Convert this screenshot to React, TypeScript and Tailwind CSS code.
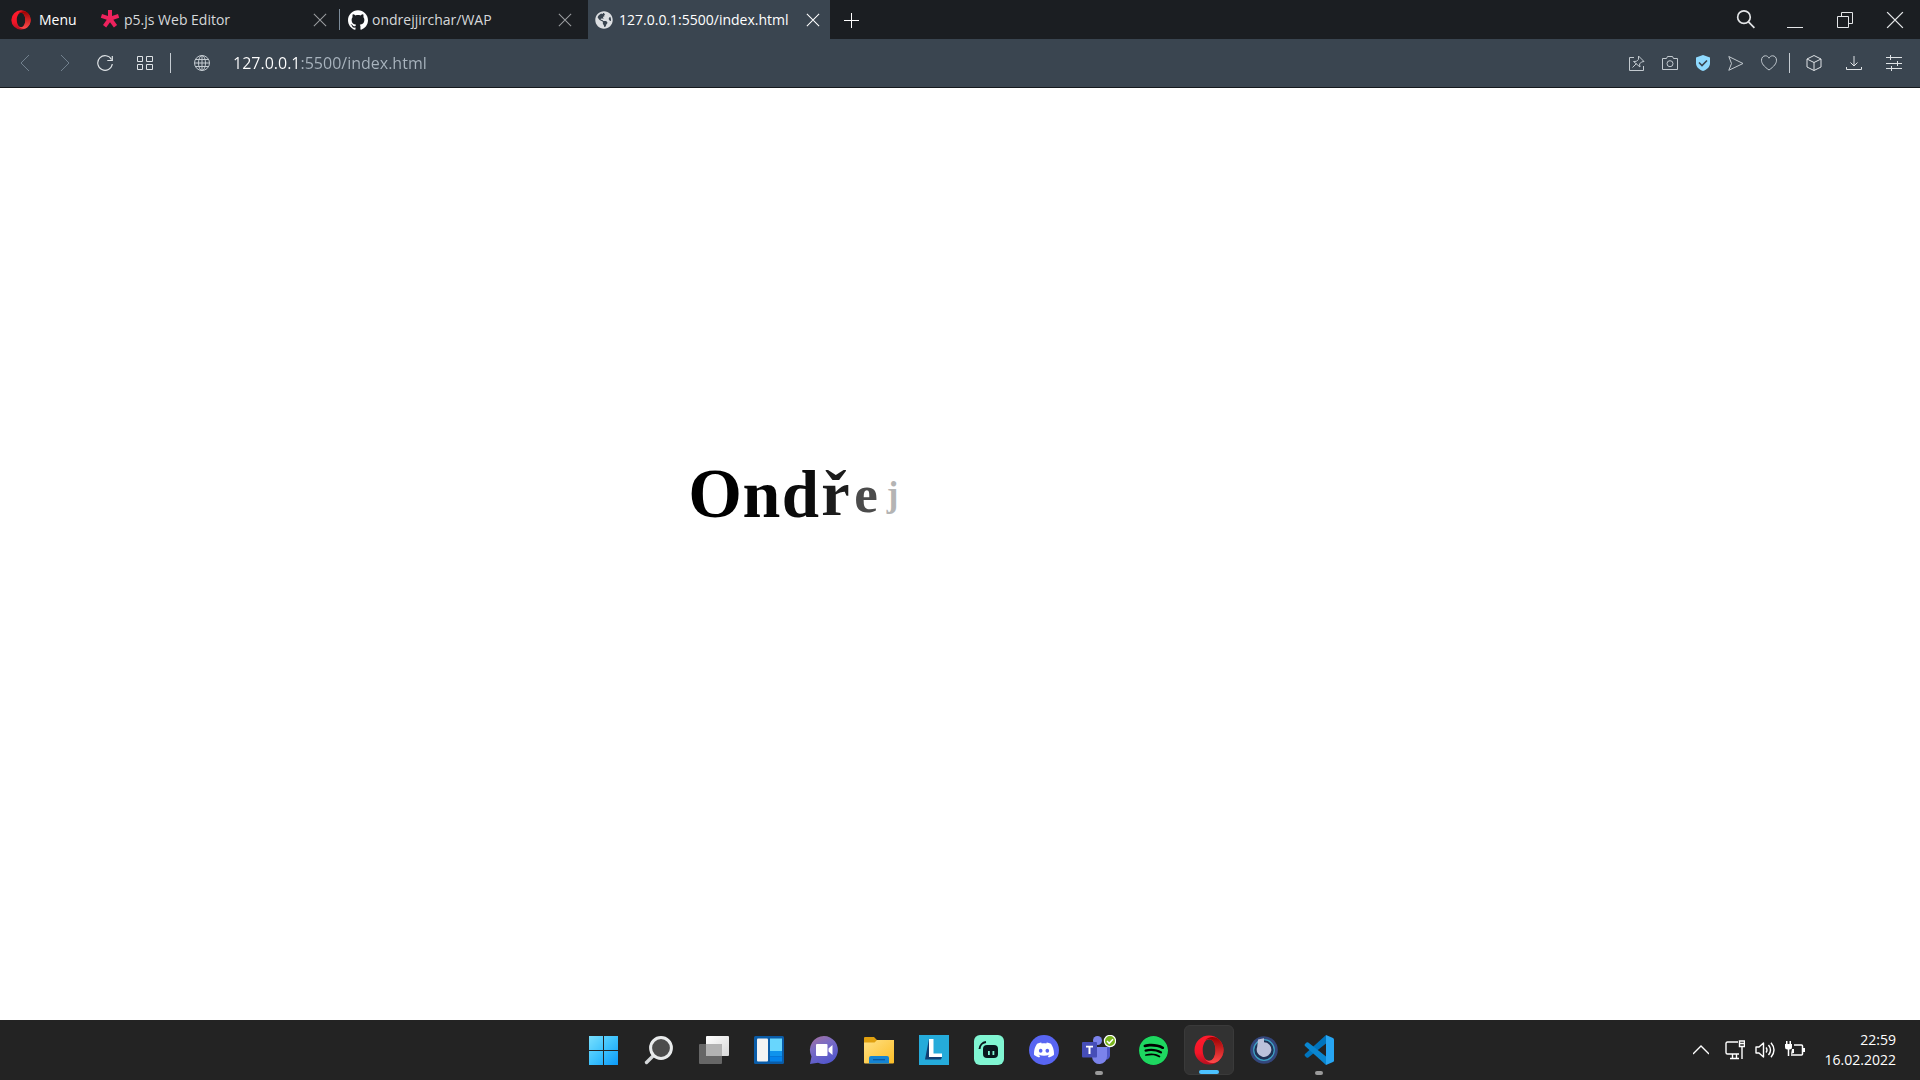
import React from 'react';
import { SiGithub, SiDiscord, SiSpotify } from 'react-icons/si';
import { FaGlobeAmericas } from 'react-icons/fa';

function Stroke({ className, size = 16, width = 1, children }: { className?: string; size?: number; width?: number; children: React.ReactNode }) {
  return (
    <svg width={size} height={size} viewBox="0 0 16 16" fill="none" stroke="currentColor" strokeWidth={width} className={className} aria-hidden="true">
      {children}
    </svg>
  );
}

function Cross({ size = 14, width = 1.2 }: { size?: number; width?: number }) {
  return (
    <Stroke size={size} width={width}>
      <path d="M1 1l14 14M15 1L1 15" />
    </Stroke>
  );
}

function OperaMark({ size, id }: { size: number; id: string }) {
  return (
    <svg width={size} height={size} viewBox="0 0 30 30" aria-hidden="true">
      <defs>
        <linearGradient id={id + 'a'} x1="0" y1="0" x2="0" y2="1">
          <stop offset="0" stopColor="#ff1b2d" />
          <stop offset=".6" stopColor="#f31628" />
          <stop offset="1" stopColor="#b50f20" />
        </linearGradient>
        <linearGradient id={id + 'b'} x1="0" y1="0" x2="0" y2="1">
          <stop offset="0" stopColor="#9c0000" />
          <stop offset="1" stopColor="#ff4b4b" />
        </linearGradient>
      </defs>
      <path fillRule="evenodd" fill={`url(#${id}a)`} d="M15 .5a14.500 14.500 0 1 0 0 29a14.500 14.500 0 1 0 0-29zM15.200 4.200c3.600 0 6.300 4.700 6.300 10.800s-2.700 10.800-6.300 10.800S8.700 21.100 8.700 15s2.900-10.800 6.500-10.800z" />
      <path fill={`url(#${id}b)`} d="M11 5.500C12.500 4.400 13.700 4.100 15.200 4.200c3.600 0 6.300 4.700 6.300 10.800s-2.700 10.800-6.300 10.800c-1.500 0-3-.6-4.200-1.500 3 4.300 9.300 4.900 13.800 1.400a14.500 14.500 0 0 0 0-21.400C20.300.8 14 1.500 11 5.500z" />
    </svg>
  );
}

function P5Mark() {
  return (
    <svg width="20" height="20" viewBox="0 0 20 20" fill="#ed225d" aria-hidden="true">
      <path d="M8 0h4v6l6-2 1.200 3.800-5.900 1.900 3.800 5.300-3.200 2.400L10 12.300l-3.800 5.200L3 15.100l3.800-5.300L.8 7.800 2 4l6 2z" />
    </svg>
  );
}

function WindowsIcon() {
  return (
    <svg width="30" height="30" viewBox="0 0 30 30" aria-hidden="true">
      <defs>
        <linearGradient id="win" x1="0" y1="0" x2="30" y2="30" gradientUnits="userSpaceOnUse">
          <stop offset="0" stopColor="#7be0fd" />
          <stop offset=".5" stopColor="#3dc2fd" />
          <stop offset="1" stopColor="#0a98f8" />
        </linearGradient>
      </defs>
      <path fill="url(#win)" d="M0 1h14v14H0zM15 1h14v14H15zM0 16h14v14H0zM15 16h14v14H15z" />
    </svg>
  );
}

function TaskSearchIcon() {
  return (
    <svg width="30" height="30" viewBox="0 0 30 30" fill="none" aria-hidden="true">
      <path d="M2.500 27.500l7-7" stroke="#d5d8da" strokeWidth="3.400" strokeLinecap="round" />
      <circle cx="17" cy="13" r="10.400" fill="#4c4c4c" stroke="#e9ebec" strokeWidth="3" />
    </svg>
  );
}

function TaskViewIcon() {
  return (
    <svg width="30" height="30" viewBox="0 0 30 30" aria-hidden="true">
      <defs>
        <linearGradient id="tv" x1="0" y1="0" x2="1" y2="1">
          <stop offset="0" stopColor="#fff" />
          <stop offset="1" stopColor="#d8d8d8" />
        </linearGradient>
      </defs>
      <rect y="9" width="23" height="20" rx="1" fill="#666" />
      <rect x="7" y="1" width="23" height="20" rx="1" fill="url(#tv)" />
      <path d="M7 9h16v12H7z" fill="#b2b2b2" />
    </svg>
  );
}

function WidgetsIcon() {
  return (
    <svg width="30" height="30" viewBox="0 0 30 30" aria-hidden="true">
      <rect y="1" width="30" height="28" rx="1.500" fill="#0a5ca8" />
      <rect x="3" y="3.500" width="11" height="23" rx="1" fill="#f3f3f3" />
      <path d="M16 3.500h12V16H16z" fill="#68d6fd" />
      <path d="M16 16h12v5H16z" fill="#0f93ec" />
      <path d="M16 21.300h12v5.200H16z" fill="#0583ea" />
    </svg>
  );
}

function ChatIcon() {
  return (
    <svg width="30" height="30" viewBox="0 0 30 30" aria-hidden="true">
      <defs>
        <linearGradient id="chat" x1="0" y1="0" x2=".5" y2="1">
          <stop offset="0" stopColor="#a8709c" />
          <stop offset=".45" stopColor="#7a6cc4" />
          <stop offset="1" stopColor="#5558cc" />
        </linearGradient>
      </defs>
      <path fill="url(#chat)" d="M15 1a14 14 0 1 1-6 26.700L1 29l1.500-7.500A14 14 0 0 1 15 1z" />
      <rect x="7" y="9" width="11.500" height="12" rx="1" fill="#fff" />
      <path d="M19.500 13.500l4-3.500v10l-4-3.500z" fill="#fff" />
    </svg>
  );
}

function FolderIcon() {
  return (
    <svg width="30" height="30" viewBox="0 0 30 30" aria-hidden="true">
      <defs>
        <linearGradient id="fold" x1="0" y1="0" x2="1" y2="1">
          <stop offset="0" stopColor="#ffe083" />
          <stop offset="1" stopColor="#fcbd26" />
        </linearGradient>
      </defs>
      <path d="M0 3q0-1 1-1h9l3 3h16q1 0 1 1v6H0z" fill="#e0a00f" />
      <path d="M0 7.500h10.500L13 5h17v22.500q0 1-1 1H1q-1 0-1-1z" fill="url(#fold)" />
      <path d="M5 28.500V23q0-2 2-2h16q2 0 2 2v5.500z" fill="#1484d3" />
      <path d="M9 24.700h12" stroke="#0a549b" strokeWidth="1.200" />
    </svg>
  );
}

function LIcon() {
  return (
    <svg width="30" height="30" viewBox="0 0 30 30" aria-hidden="true">
      <path d="M0 0h30v30H0z" fill="#25abda" />
      <path d="M10 4L6 24.500h16l1-2.500-12-1z" fill="#123f73" />
      <path d="M10 4h4.500v14.500H23V22H10z" fill="#fff" />
    </svg>
  );
}

function StreamlabsIcon() {
  return (
    <svg width="30" height="30" viewBox="0 0 30 30" aria-hidden="true">
      <rect width="30" height="30" rx="6" fill="#80f5d2" />
      <path d="M5.500 14A7.500 7.500 0 0 1 12 7" fill="none" stroke="#09161d" strokeWidth="2" />
      <rect x="9" y="10" width="15" height="13" rx="4" fill="#09161d" />
      <path d="M14 16h1.800v4H14zM18.500 16h1.800v4h-1.800z" fill="#80f5d2" />
    </svg>
  );
}

function DiscordIcon() {
  return (
    <span className="flex size-[30px] items-center justify-center rounded-full bg-[#5865f2] text-white">
      <SiDiscord size={20} />
    </span>
  );
}

function TeamsIcon() {
  return (
    <svg width="34" height="30" viewBox="0 0 34 30" aria-hidden="true">
      <circle cx="15.500" cy="5.500" r="4.500" fill="#7b83eb" />
      <path d="M22 12h6v9a4 4 0 0 1-6 3z" fill="#5059c9" />
      <path d="M10 12h15v9a7.500 7.500 0 0 1-15 1z" fill="#7b83eb" />
      <rect y="7" width="15" height="15.500" rx="1" fill="#464eb8" />
      <path d="M4 10.800h7v1.800H8.500V19h-2v-6.400H4z" fill="#fff" />
      <circle cx="28" cy="6" r="5.600" fill="#7ab51d" stroke="#fff" strokeWidth="1.200" />
      <path d="M25 6l2.200 2.300L31 4.200" fill="none" stroke="#fff" strokeWidth="1.500" />
    </svg>
  );
}

function SpotifyIcon() {
  return (
    <span className="flex size-[29px] rounded-full bg-black text-[#1ed760]">
      <SiSpotify size={29} />
    </span>
  );
}

function OrbIcon() {
  return (
    <svg width="30" height="30" viewBox="0 0 30 30" aria-hidden="true">
      <circle cx="15" cy="15" r="13.800" fill="#34477d" />
      <circle cx="15" cy="15" r="10.300" fill="#1f3154" stroke="#3fa3c5" strokeWidth="1.200" />
      <path d="M9 4.500l6-1.200v4A7.300 7.300 0 1 1 8.200 12z" fill="#bcc2da" />
    </svg>
  );
}

function CodeIcon() {
  return (
    <svg width="30" height="30" viewBox="0 0 30 30" aria-hidden="true">
      <path d="M22 0L1 19q-1 1 0 2l1.500 1.500q.8.600 1.800 0L22 8.500z" fill="#0074bd" />
      <path d="M22 30L1 11q-1-1 0-2l1.500-1.500q.8-.6 1.800 0L22 21.500z" fill="#0a86d0" />
      <path d="M22 0l7 3q1 .6 1 1.500v21q0 1-1 1.500l-7 3z" fill="#27a5f2" />
    </svg>
  );
}

const tasks: { label: string; icon: React.ReactNode; state?: 'active' | 'open' }[] = [
  { label: 'Start', icon: <WindowsIcon /> },
  { label: 'Search', icon: <TaskSearchIcon /> },
  { label: 'Task view', icon: <TaskViewIcon /> },
  { label: 'Widgets', icon: <WidgetsIcon /> },
  { label: 'Chat', icon: <ChatIcon /> },
  { label: 'File Explorer', icon: <FolderIcon /> },
  { label: 'L', icon: <LIcon /> },
  { label: 'Streamlabs', icon: <StreamlabsIcon /> },
  { label: 'Discord', icon: <DiscordIcon /> },
  { label: 'Teams', icon: <TeamsIcon />, state: 'open' },
  { label: 'Spotify', icon: <SpotifyIcon /> },
  { label: 'Opera', icon: <OperaMark size={30} id="task" />, state: 'active' },
  { label: 'Orb', icon: <OrbIcon /> },
  { label: 'Visual Studio Code', icon: <CodeIcon />, state: 'open' },
];

function Tab({ icon, title, active, divider }: { icon: React.ReactNode; title: string; active?: boolean; divider?: boolean }) {
  return (
    <div className={active ? 'flex w-[242px] items-center bg-[#3a4550] pr-1.5 pl-[7px] text-white' : 'flex w-[248px] items-center pl-2 text-[#d6d8da] last-of-type:w-[242px]'}>
      <button className={active ? 'flex min-w-0 flex-1 items-center gap-1.5 text-left' : 'flex min-w-0 flex-1 items-center gap-1 text-left'}>
        {icon}
        <span className="whitespace-nowrap">{title}</span>
      </button>
      <button aria-label={'Close ' + title} className={active ? 'px-1' : 'px-1 text-[#9a9da0]'}>
        <Cross />
      </button>
      {divider && <span className="ml-2 h-[21px] w-px bg-[#7d8c9a]" />}
      {!active && !divider && <span className="w-3" />}
    </div>
  );
}

function ToolButton({ label, dim, children }: { label: string; dim?: boolean; children: React.ReactNode }) {
  return (
    <button aria-label={label} className={dim ? 'flex w-10 justify-center text-[#71808d]' : 'flex w-10 justify-center text-[#dfe3e6]'}>
      {children}
    </button>
  );
}

function SmallTool({ label, children }: { label: string; children: React.ReactNode }) {
  return (
    <button aria-label={label} className="flex w-[33px] justify-center text-[#c3cad0]">
      {children}
    </button>
  );
}

const letters = [
  { char: 'O', style: 'w-[54px] text-[69px] text-black' },
  { char: 'n', style: 'w-[39px] text-[68px] text-[#050505]' },
  { char: 'd', style: 'w-[39px] text-[67px] text-[#0c0c0c]' },
  { char: 'ř', style: 'w-[31px] text-[64px] text-[#1c1c1c]' },
  { char: 'e', style: 'w-[30px] text-[53px] text-[#4b4b4b]' },
  { char: 'j', style: 'w-[23px] text-[35px] text-[#b4b4b4]' },
];

export default function App() {
  return (
    <div className="flex min-h-screen flex-col bg-white font-['Open_Sans','Noto_Sans',sans-serif]">
      <header>
        <div className="flex h-[39px] items-stretch bg-[#1b1e22] text-[14px]">
          <button className="flex w-[92px] items-center gap-2 pl-[11px] text-white">
            <OperaMark size={20} id="menu" />
            Menu
          </button>
          <Tab icon={<P5Mark />} title="p5.js Web Editor" divider />
          <Tab icon={<SiGithub size={20} className="text-white" />} title="ondrejjirchar/WAP" />
          <Tab icon={<FaGlobeAmericas size={18} className="text-[#dcdfe2]" />} title="127.0.0.1:5500/index.html" active />
          <button aria-label="New tab" className="flex w-[42px] items-center justify-center text-white">
            <Stroke>
              <path d="M8.500 1v15M1 8.500h15" />
            </Stroke>
          </button>
          <div className="ml-auto flex items-center text-[#e4e6e8]">
            <button aria-label="Search tabs" className="flex w-[50px] justify-center">
              <Stroke size={19} width={1.4}>
                <circle cx="6.700" cy="6" r="5.300" />
                <path d="M10.500 10l5 5" />
              </Stroke>
            </button>
            <button aria-label="Minimize" className="flex w-[50px] justify-center">
              <Stroke>
                <path d="M0 15.500h16" />
              </Stroke>
            </button>
            <button aria-label="Restore" className="flex w-[50px] justify-center">
              <Stroke>
                <path d="M.5 4.500h11v11H.5zM4.500 4.500v-4h11v11h-4" />
              </Stroke>
            </button>
            <button aria-label="Close window" className="flex w-[50px] justify-center">
              <Cross size={18} />
            </button>
          </div>
        </div>
        <div className="flex h-[49px] items-center border-b border-[#15191d] bg-[#3a4550] pr-1.5 pl-[5px]">
          <ToolButton label="Back" dim>
            <Stroke><path d="M12 0L4 8l8 8" /></Stroke>
          </ToolButton>
          <ToolButton label="Forward" dim>
            <Stroke><path d="M4 0l8 8-8 8" /></Stroke>
          </ToolButton>
          <ToolButton label="Reload">
            <Stroke width={1.2}>
              <path d="M14.500 4.500A7.300 7.300 0 1 0 15.300 9" />
              <path d="M15.300 1v4.500h-5" />
            </Stroke>
          </ToolButton>
          <ToolButton label="Speed dial">
            <Stroke><path d="M.5 1.500h5v5h-5zM9.500 1.500h6v5h-6zM.5 9.500h5v5h-5zM9.500 9.500h6v5h-6z" /></Stroke>
          </ToolButton>
          <span className="ml-[5px] h-5 w-px bg-[#c5ccd2]" />
          <label htmlFor="address" className="flex w-[62px] justify-center text-[#c3cad0]" aria-label="Address">
            <Stroke>
              <circle cx="8" cy="8" r="7.500" />
              <ellipse cx="8" cy="8" rx="3.500" ry="7.500" />
              <path d="M8 .5v15M.5 8h15M1.500 4.500h13M1.500 11.500h13" />
            </Stroke>
          </label>
          <input
            id="address"
            type="text"
            aria-label="Address"
            defaultValue="127.0.0.1:5500/index.html"
            className="min-w-0 flex-1 bg-[linear-gradient(90deg,#fff_67px,#a9b4be_67px)] bg-clip-text text-[16px] text-transparent caret-white outline-none"
          />
          <SmallTool label="Pin">
            <Stroke>
              <path d="M5 2.500H.5v13h14V11M9.500 1l5.500 5.500-2.500.5-2 2 .5 3L4.500 6.500l3-.2 2-2zM7.500 8.500l-4 4" />
            </Stroke>
          </SmallTool>
          <SmallTool label="Snapshot">
            <Stroke>
              <path d="M.5 3.500h4l1-2h5l1 2h4v11H.5z" />
              <circle cx="8" cy="8.700" r="3" />
            </Stroke>
          </SmallTool>
          <SmallTool label="Ad blocker">
            <svg width="16" height="16" viewBox="0 0 16 16" aria-hidden="true">
              <path d="M8 0l7 2.500V8c0 4-3 6.500-7 8C4 14.500 1 12 1 8V2.500z" fill="#8fdaff" />
              <path d="M4 7.500l3 3L12 5.500" fill="none" stroke="#3a4550" strokeWidth="1.600" />
            </svg>
          </SmallTool>
          <SmallTool label="My Flow">
            <Stroke><path d="M.8 1.500L15 8.500.8 15.300 3.500 8.500z" /></Stroke>
          </SmallTool>
          <SmallTool label="Bookmark">
            <Stroke><path d="M8 15C3 11.500.5 8.500.5 5.200.5 2.500 2.300.8 4.400.8 6 .8 7.300 1.700 8 3.200 8.700 1.700 10 .8 11.600.8c2.100 0 3.900 1.700 3.900 4.400C15.500 8.500 13 11.500 8 15z" /></Stroke>
          </SmallTool>
          <span className="mr-1 ml-1 h-5 w-px bg-[#c5ccd2]" />
          <ToolButton label="Wallet">
            <Stroke><path d="M8 .5l7 3.500v8l-7 3.500L1 12V4zM1 4l7 3.500L15 4M8 7.500v8" /></Stroke>
          </ToolButton>
          <ToolButton label="Downloads">
            <Stroke><path d="M8 1v10M4.500 7.500L8 11l3.500-3.500M.5 12v2.500h15V12" /></Stroke>
          </ToolButton>
          <ToolButton label="Easy setup">
            <Stroke><path d="M0 2.500h16M0 8.500h16M0 13.500h16M4.500 0v5M11.500 6v5M5.500 11v5" /></Stroke>
          </ToolButton>
        </div>
      </header>

      <main className="flex flex-1 items-center justify-center pb-30">
        <h1 className="flex w-[544px] items-center font-['Liberation_Serif',serif] leading-none font-bold">
          {letters.map((l) => (
            <span key={l.char} className={'text-center leading-none ' + l.style}>{l.char}</span>
          ))}
        </h1>
      </main>

      <footer className="grid h-15 grid-cols-[1fr_auto_1fr] items-center bg-[#232323] pl-0.5 text-white">
        <span />
        <nav className="flex">
          {tasks.map((t) => (
            <div key={t.label} className="flex w-[55px] justify-center">
              <button
                aria-label={t.label}
                className={t.state === 'active' ? 'relative flex size-[50px] items-center justify-center rounded-md border border-[#3a3a3a] bg-[#323232]' : 'relative flex size-[50px] items-center justify-center'}
              >
                {t.icon}
                {t.state === 'active' && <span className="absolute bottom-0 h-1 w-5 rounded-full bg-[#4cc2ff]" />}
                {t.state === 'open' && <span className="absolute bottom-0 h-1 w-2 rounded-full bg-[#9a9a9a]" />}
              </button>
            </div>
          ))}
        </nav>
        <div className="flex items-center justify-end pr-6">
          <button aria-label="Show hidden icons" className="mr-4">
            <Stroke width={1.3}><path d="M0 12l8-8 8 8" /></Stroke>
          </button>
          <button aria-label="Network, volume and battery" className="mr-5 flex gap-2.5">
            <svg width="20" height="20" viewBox="0 0 20 20" fill="none" stroke="currentColor" strokeWidth="1.400" aria-hidden="true">
              <path d="M13 2H2.500Q1 2 1 3.500v9Q1 14 2.500 14H14M5 18.500h9M7.500 14v4.500M11.500 14v4.500M17 7v12M14.500 1h5v5.500h-5zM14.500 3.500h5" />
            </svg>
            <svg width="20" height="20" viewBox="0 0 20 20" fill="none" stroke="currentColor" strokeWidth="1.400" strokeLinejoin="round" aria-hidden="true">
              <path d="M1 7h3l4.500-4v14L4 13H1zM11 7.500q2 2.500 0 5M13.500 5q4 5 0 10M16 2.800q6 7.200 0 14.400" />
            </svg>
            <svg width="20" height="20" viewBox="0 0 20 20" fill="none" stroke="currentColor" strokeWidth="1.500" aria-hidden="true">
              <path d="M9 5h7.500q1 0 1 1v8q0 1-1 1H6M3.500 9v7" />
              <path d="M0 4h7v3q0 2.500-2.500 2.500h-2Q0 9.500 0 7zM1 1h1.500v3H1zM4.500 1H6v3H4.500zM18 8h2v4h-2zM7 9h2v4l-3 1z" fill="currentColor" stroke="none" />
            </svg>
          </button>
          <time dateTime="2022-02-16T22:59" className="text-right text-[14px] leading-5">
            22:59
            <br />
            16.02.2022
          </time>
        </div>
      </footer>
    </div>
  );
}
